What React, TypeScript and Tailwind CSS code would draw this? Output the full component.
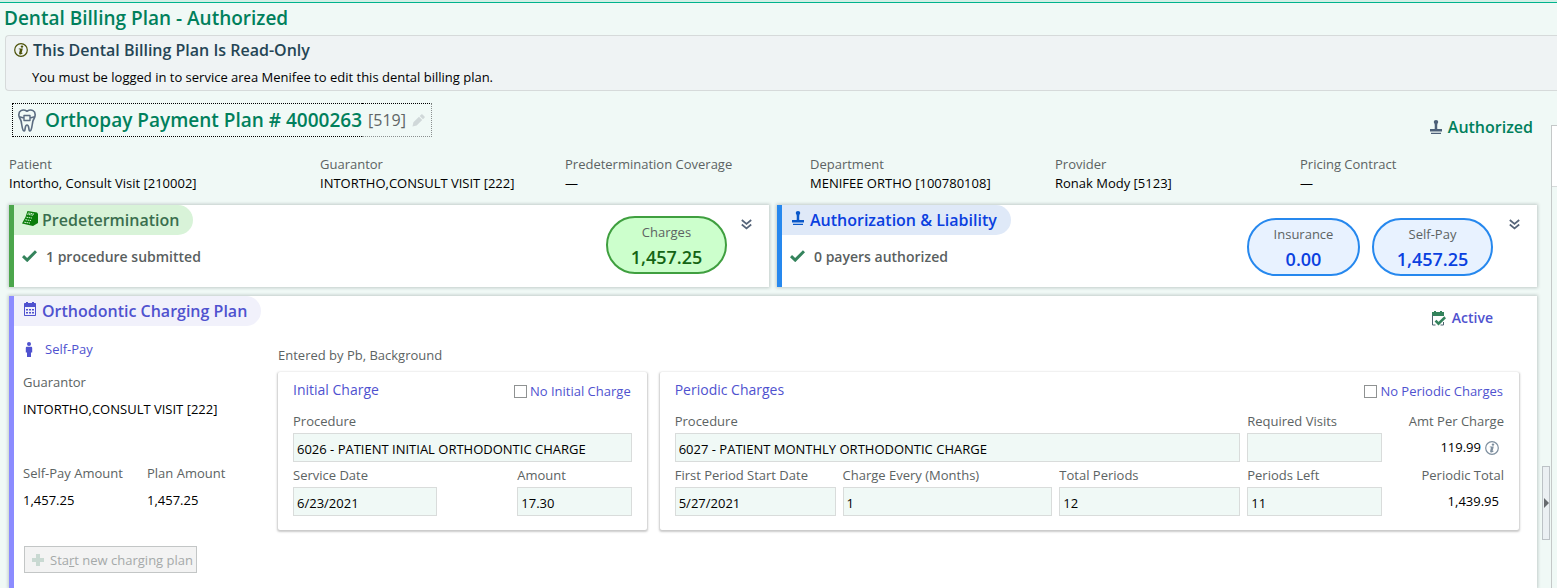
import { useId } from "react";
import type { ReactNode } from "react";

const cardShadow = "shadow-[0_0_3px_1px_rgba(80,90,90,0.28)]";

function InfoIcon({ className }: { className: string }) {
  return (
    <svg viewBox="0 0 14 14" className={className} fill="none" aria-hidden="true">
      <circle cx="7" cy="7" r="6.3" stroke="currentColor" strokeWidth="1.2" />
      <circle cx="8" cy="3.6" r="1.2" fill="currentColor" />
      <path d="M4.800 5.400h4L7.700 9.700c-.1.500.2.500.9 0l.3.400c-.8 1-1.900 1.500-2.900 1.300-.9-.2-1-.9-.8-1.700l.7-2.900c0-.3-.2-.4-1.200-.500z" fill="currentColor" />
    </svg>
  );
}

function ToothIcon() {
  return (
    <svg viewBox="0 0 18 23" className="h-[23px] w-[18px] shrink-0 text-[#5a6b80]" fill="none" stroke="currentColor" strokeWidth="1.600" strokeLinejoin="round" aria-hidden="true">
      <path d="M9 2.200C7 1 4.800.6 3 1.600 1 2.700.6 5 1 7.200c.4 2.200 1.800 3.300 2.200 5.300.6 3 .7 6 1.900 8.800.3.800 1.500.8 1.700 0 .6-2.300.2-5.300 2.200-5.300s1.600 3 2.200 5.300c.2.800 1.400.8 1.700 0 1.200-2.800 1.300-5.800 1.900-8.800.4-2 1.800-3.100 2.200-5.300.4-2.200 0-4.500-2-5.600C13.200.6 11 1 9 2.200z" />
      <path d="M6 6.500h6v5H6zM1.200 7.800L6 9M12 9l4.800-1.200" strokeWidth="1.400" />
    </svg>
  );
}

function PencilIcon() {
  return (
    <svg viewBox="0 0 14 14" className="h-[13px] w-[13px] shrink-0 text-[#d0d8d9]" fill="currentColor" aria-hidden="true">
      <path d="M.5 13.500l1-4.500 6-6 3.500 3.500-6 6zM8.300 2.200L10 .5c.4-.4.900-.4 1.300 0l2.200 2.200c.4.4.4.900 0 1.300l-1.700 1.700z" />
    </svg>
  );
}

function StampIcon({ className }: { className: string }) {
  return (
    <svg viewBox="0 0 12 14" className={className} fill="currentColor" aria-hidden="true">
      <path d="M6 0c1.500 0 2.200.8 2.200 1.900 0 .9-.6 1.400-.8 2.100-.2.800-.2 3-.1 5H12v2.500H0V9h4.700c.1-2 .1-4.200-.1-5-.2-.7-.8-1.200-.8-2.100C3.800.8 4.500 0 6 0zM1 12.700h10V14H1z" />
    </svg>
  );
}

function RegisterIcon() {
  return (
    <svg viewBox="0 0 16 15" className="h-[15px] w-4 shrink-0 text-[#0a7d0a]" fill="currentColor" aria-hidden="true">
      <path d="M5.500 0L15 1.500l1 1.500v9l-5 3L0 12.500 3.500 6z" />
      <path d="M6.200 2l5.300.8-.5 1.400-5.400-.8zM4.500 6.200l5.500.9M3.400 8.700l5.600.9M2.300 11.200l5.700.9" stroke="#d8f3d8" strokeWidth="1" strokeDasharray="1.700 .6" fill="none" />
    </svg>
  );
}

function CheckIcon() {
  return (
    <svg viewBox="0 0 15 12" className="h-3 w-[15px] shrink-0 text-[#34835c]" fill="none" stroke="currentColor" strokeWidth="3" aria-hidden="true">
      <path d="M1 6.200l4.200 3.900L14 1.200" />
    </svg>
  );
}

function CalendarIcon() {
  return (
    <svg viewBox="0 0 12 14" className="h-[14px] w-3 shrink-0 text-[#4f52cf]" fill="currentColor" aria-hidden="true">
      <path fillRule="evenodd" d="M2 0h2v1h4V0h2v1h1c.6 0 1 .4 1 1v11c0 .6-.4 1-1 1H1c-.6 0-1-.4-1-1V2c0-.6.4-1 1-1h1zM1 5v8h10V5z" />
      <path d="M2 7h2v1.500H2zM5 7h2v1.500H5zM8 7h2v1.500H8zM2 10h2v1.500H2zM5 10h2v1.500H5zM8 10h2v1.500H8z" />
    </svg>
  );
}

function CalendarCheckIcon() {
  return (
    <svg viewBox="0 0 14 15" className="h-[15px] w-[14px] shrink-0 text-[#34835c]" fill="none" aria-hidden="true">
      <path d="M2 0h2v1h4V0h2v1h2v4H0V1h2z" fill="currentColor" />
      <path d="M.5 4v10h3M8.500 14h3v-3" stroke="#4d6470" />
      <path d="M3.500 9.700l3 3 6.700-6.400" stroke="currentColor" strokeWidth="2.600" />
    </svg>
  );
}

function PersonIcon() {
  return (
    <svg viewBox="0 0 8 15" className="h-[15px] w-2 shrink-0 text-[#4f52cf]" fill="currentColor" aria-hidden="true">
      <circle cx="4" cy="2" r="2" />
      <path d="M2 4.800h4c.7 0 1.200.5 1.200 1.200v4.500H6V15H2v-4.500H.8V6c0-.7.5-1.200 1.200-1.200z" />
    </svg>
  );
}

function DoubleChevron() {
  return (
    <button type="button" aria-label="Expand section" className="mt-2 flex h-[22px] w-[22px] items-center justify-center text-[#56657a]">
      <svg viewBox="0 0 11 11" className="h-[11px] w-[11px]" fill="none" stroke="currentColor" strokeWidth="1.700" aria-hidden="true">
        <path d="M.8 1l4.700 4 4.700-4M.8 5.500l4.700 4 4.700-4" />
      </svg>
    </button>
  );
}

function SummaryItem({ label, value }: { label: string; value: string }) {
  return (
    <div>
      <dt className="text-[13px] leading-5 text-[#5c6363]">{label}</dt>
      <dd className="text-[13px] leading-[18px] text-black">{value}</dd>
    </div>
  );
}

function Pill({ label, value, className }: { label: string; value: string; className: string }) {
  return (
    <div className={`flex h-[58px] flex-col items-center rounded-full border-2 pt-1 ${className}`}>
      <span className="text-[13px] leading-5 text-[#5c6363]">{label}</span>
      <span className="text-[18px] leading-[31px] font-semibold">{value}</span>
    </div>
  );
}

function Tag({ icon, className, children }: { icon: ReactNode; className: string; children: ReactNode }) {
  return (
    <h2 className={`flex h-[30px] w-fit items-center gap-1 rounded-r-full pr-3.5 pl-2 text-[16px] font-semibold ${className}`}>
      <span className="flex w-4 justify-center pb-1">{icon}</span>
      {children}
    </h2>
  );
}

function Status({ children }: { children: ReactNode }) {
  return (
    <p className="flex h-[42px] items-center gap-[9px] pl-2 text-[14px] font-semibold text-[#5a5f5f]">
      <CheckIcon />
      {children}
    </p>
  );
}

function Field({ label, value, className = "" }: { label: string; value: string; className?: string }) {
  const id = useId();
  return (
    <div className={`min-w-0 ${className}`}>
      <label htmlFor={id} className="block h-[25px] text-[13px] leading-[26px] whitespace-nowrap text-[#5c6363]">
        {label}
      </label>
      <input id={id} readOnly defaultValue={value} className="block h-[29px] w-full border border-[#d9dcdb] bg-[#f0f9f6] px-[3px] pt-[3px] text-[13px] text-black outline-none" />
    </div>
  );
}

function Total({ label, value, children }: { label: string; value: string; children?: ReactNode }) {
  return (
    <dl className="text-right text-[13px] whitespace-nowrap">
      <dt className="h-[25px] leading-[26px] text-[#5c6363]">{label}</dt>
      <dd className="flex h-[29px] items-center justify-end gap-1 pr-[5px] text-black">
        {value}
        {children}
      </dd>
    </dl>
  );
}

function ChargeBox({ title, option, children }: { title: string; option: string; children: ReactNode }) {
  return (
    <section className="rounded-xs bg-white px-[15px] pt-1 pb-[14px] shadow-[0_1px_2px_1px_rgba(80,80,80,0.3)]">
      <div className="mb-0.5 flex h-[30px] items-center justify-between">
        <h3 className="pb-0.5 text-[14px] leading-5 text-[#4f52cf]">{title}</h3>
        <label className="flex items-center gap-[3px] pr-px text-[13px] leading-5 text-[#4f52cf]">
          <input type="checkbox" className="h-[13px] w-[13px] appearance-none border border-[#8f9292] bg-white" />
          {option}
        </label>
      </div>
      {children}
    </section>
  );
}

export default function App() {
  return (
    <div className="flex min-h-screen flex-col overflow-hidden bg-[#f0f9f6] font-['Open_Sans','Noto_Sans',sans-serif] text-black">
      <div className="h-[3px] border-b border-[#00b38c] bg-[#d2efe6]" />
      <h1 className="pb-0.5 pl-1 text-[19px] leading-[30px] font-semibold text-[#00805c]">Dental Billing Plan - Authorized</h1>

      <section className="ml-[5px] h-14 rounded-l-sm border border-r-0 border-[#d6dada] bg-[#eff3f4] pl-2">
        <h2 className="flex h-7 items-center gap-[5px] text-[16px] font-semibold text-[#254555]">
          <InfoIcon className="h-[14px] w-[14px] shrink-0 text-[#4d5208]" />
          This Dental Billing Plan Is Read-Only
        </h2>
        <p className="pl-[18px] text-[13px] leading-[26px]">You must be logged in to service area Menifee to edit this dental billing plan.</p>
      </section>

      <div className="flex grow">
        <main className="flex min-w-0 grow flex-col pr-px pl-[9px]">
          <div className="flex justify-between pt-3">
            <button type="button" className="ml-[3px] flex h-[34px] items-stretch">
              <span className="flex items-center gap-[9px] border border-r-0 border-dotted border-black pl-[5px] text-[19px] font-semibold text-[#00805c]">
                <ToothIcon />
                Orthopay Payment Plan # 4000263
              </span>
              <span className="flex items-center gap-1.5 border border-l-0 border-dotted border-t-black border-r-[#8a8f8f] border-b-[#8a8f8f] px-1.5 text-[16px] text-[#5f6666]">
                [519]
                <PencilIcon />
              </span>
            </button>
            <p className="flex items-center gap-1.5 pt-3.5 pr-1 text-[16px] leading-5 font-semibold text-[#00805c]">
              <StampIcon className="h-[14px] w-3 shrink-0 text-[#4d6078]" />
              Authorized
            </p>
          </div>

          <dl className="grid grid-cols-[311fr_245fr_245fr_245fr_245fr_237fr] pt-[17px]">
            <SummaryItem label="Patient" value="Intortho, Consult Visit [210002]" />
            <SummaryItem label="Guarantor" value="INTORTHO,CONSULT VISIT [222]" />
            <SummaryItem label="Predetermination Coverage" value="—" />
            <SummaryItem label="Department" value="MENIFEE ORTHO [100780108]" />
            <SummaryItem label="Provider" value="Ronak Mody [5123]" />
            <SummaryItem label="Pricing Contract" value="—" />
          </dl>

          <div className="grid grid-cols-2 gap-2 pt-[13px]">
            <section className={`flex h-[82px] justify-between border-l-[5px] border-[#4ca64c] bg-white ${cardShadow}`}>
              <div>
                <Tag icon={<RegisterIcon />} className="bg-[#d8f3d8] text-[#3a6e4e]">Predetermination</Tag>
                <Status>1 procedure submitted</Status>
              </div>
              <div className="flex gap-2 pr-3">
                <Pill label="Charges" value="1,457.25" className="mt-[11px] w-[121px] border-[#3f9f3f] bg-[#ccffcc] text-[#146414]" />
                <DoubleChevron />
              </div>
            </section>
            <section className={`flex h-[82px] justify-between border-l-[5px] border-[#2688ee] bg-white ${cardShadow}`}>
              <div>
                <Tag icon={<StampIcon className="h-[14px] w-3 shrink-0 text-[#0a58ca]" />} className="bg-[#dfe9f8] text-[#0a40e0]">Authorization &amp; Liability</Tag>
                <Status>0 payers authorized</Status>
              </div>
              <div className="flex gap-2.5 pr-3">
                <div className="flex gap-3">
                  <Pill label="Insurance" value="0.00" className="mt-[13px] w-[113px] border-[#2688ee] bg-[#e8f2ff] text-[#0a40e0]" />
                  <Pill label="Self-Pay" value="1,457.25" className="mt-[13px] w-[121px] border-[#2688ee] bg-[#e8f2ff] text-[#0a40e0]" />
                </div>
                <DoubleChevron />
              </div>
            </section>
          </div>

          <section className={`mt-[9px] grow border-l-[5px] border-[#8c8cff] bg-white ${cardShadow}`}>
            <div className="flex justify-between">
              <Tag icon={<CalendarIcon />} className="bg-[#f1f1fb] text-[#4f52cf]">Orthodontic Charging Plan</Tag>
              <p className="flex items-center gap-1.5 pt-3 pr-11 text-[14px] leading-5 font-semibold text-[#4f52cf]">
                <CalendarCheckIcon />
                Active
              </p>
            </div>
            <div className="flex">
              <div className="w-[264px] shrink-0 pt-[11px] pl-[9px] text-[13px] leading-5">
                <p className="flex items-center gap-3 pl-0.5 text-[#4f52cf]">
                  <PersonIcon />
                  Self-Pay
                </p>
                <dl className="pt-[13px]">
                  <dt className="text-[#5c6363]">Guarantor</dt>
                  <dd className="pt-[7px]">INTORTHO,CONSULT VISIT [222]</dd>
                </dl>
                <dl className="grid grid-cols-[124px_1fr] gap-y-[7px] pt-11">
                  <dt className="text-[#5c6363]">Self-Pay Amount</dt>
                  <dt className="text-[#5c6363]">Plan Amount</dt>
                  <dd>1,457.25</dd>
                  <dd>1,457.25</dd>
                </dl>
                <button type="button" disabled className="mt-9 ml-px flex h-[27px] items-center gap-1.5 border border-[#c3c6c6] bg-[#f3f3f3] pr-[3px] pl-[7px] text-[#a5a9a9]">
                  <svg viewBox="0 0 12 12" className="h-3 w-3" fill="#c9d9d2" aria-hidden="true">
                    <path d="M4 0h4v4h4v4H8v4H4V8H0V4h4z" />
                  </svg>
                  <span>Sta<span className="underline">r</span>t new charging plan</span>
                </button>
              </div>

              <div className="min-w-0 grow pr-[18px]">
                <p className="h-11 pt-[17px] text-[13px] leading-5 text-[#5c6363]">Entered by Pb, Background</p>
                <div className="grid grid-cols-[369fr_860fr] gap-[13px]">
                  <ChargeBox title="Initial Charge" option="No Initial Charge">
                    <Field label="Procedure" value="6026 - PATIENT INITIAL ORTHODONTIC CHARGE" />
                    <div className="grid grid-cols-[145fr_115fr] gap-20">
                      <Field label="Service Date" value="6/23/2021" />
                      <Field label="Amount" value="17.30" />
                    </div>
                  </ChargeBox>
                  <ChargeBox title="Periodic Charges" option="No Periodic Charges">
                    <div className="grid grid-cols-[161fr_210fr_181fr_135fr_115fr] gap-x-[7px]">
                      <Field className="col-span-3" label="Procedure" value="6027 - PATIENT MONTHLY ORTHODONTIC CHARGE" />
                      <Field label="Required Visits" value="" />
                      <Total label="Amt Per Charge" value="119.99">
                        <InfoIcon className="h-[14px] w-[14px] text-[#7e8f9f]" />
                      </Total>
                      <Field label="First Period Start Date" value="5/27/2021" />
                      <Field label="Charge Every (Months)" value="1" />
                      <Field label="Total Periods" value="12" />
                      <Field label="Periods Left" value="11" />
                      <Total label="Periodic Total" value="1,439.95" />
                    </div>
                  </ChargeBox>
                </div>
              </div>
            </div>
          </section>
        </main>

        <aside className="flex shrink-0 pl-1">
          <button type="button" aria-label="Collapse side panel" className="mt-[375px] flex h-[74px] w-2 items-center justify-center self-start border border-[#bcc2c6] bg-[#ebf0f3]">
            <svg viewBox="0 0 5 10" className="h-[10px] w-[5px] shrink-0" fill="#666a6e" aria-hidden="true">
              <path d="M0 0l5 5-5 5z" />
            </svg>
          </button>
          <div className="mt-[34px] ml-px w-1.5 border-t border-l border-[#c4c8c8]">
            <div className="h-[61px] border-b border-[#d6dada] bg-white" />
          </div>
        </aside>
      </div>
    </div>
  );
}
